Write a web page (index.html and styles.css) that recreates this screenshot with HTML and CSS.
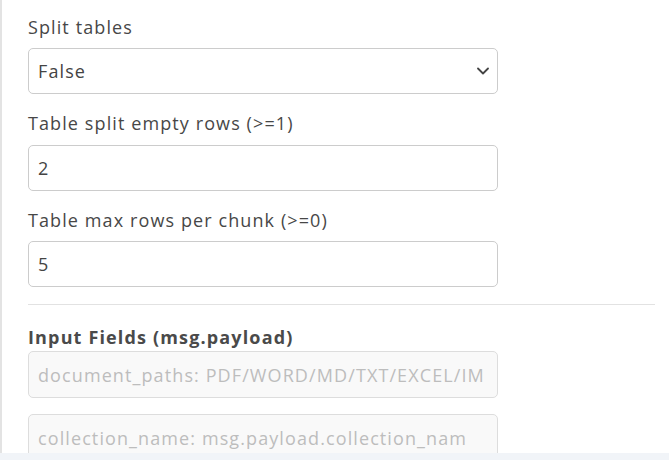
FILE: index.html
```html
<!DOCTYPE html>
<html>
<head>
<meta charset="utf-8">
<link rel="stylesheet" href="styles.css">
</head>
<body>
<div class="viewport">
  <div class="panel">
    <div class="field">
      <label class="label">Split tables</label>
      <div class="select">
        <span class="value">False</span>
        <svg class="chevron" width="12" height="8" viewBox="0 0 12 8"><path d="M1 1.5 L6 6.5 L11 1.5" fill="none" stroke="#444" stroke-width="1.8" stroke-linecap="round" stroke-linejoin="round"/></svg>
      </div>
    </div>
    <div class="field">
      <label class="label">Table split empty rows (&gt;=1)</label>
      <div class="input"><span class="value">2</span></div>
    </div>
    <div class="field">
      <label class="label">Table max rows per chunk (&gt;=0)</label>
      <div class="input"><span class="value">5</span></div>
    </div>
    <hr class="divider">
    <div class="heading">Input Fields (msg.payload)</div>
    <div class="input disabled"><span class="value">document_paths: PDF/WORD/MD/TXT/EXCEL/IM</span></div>
    <div class="input disabled"><span class="value">collection_name: msg.payload.collection_nam</span></div>
  </div>
</div>
<div class="strip"></div>
</body>
</html>
```

FILE: styles.css
```css
html, body {
  margin: 0;
  padding: 0;
  background: #ffffff;
}
body {
  font-family: "Open Sans", "DejaVu Sans", sans-serif;
  color: #444444;
  width: 669px;
  height: 460px;
  overflow: hidden;
}
.viewport {
  height: 453px;
  overflow: hidden;
  border-left: 2px solid #e3e3e3;
  box-sizing: border-box;
}
.panel {
  padding: 13.5px 14px 0 26px;
  display: flex;
  flex-direction: column;
}
.field {
  display: flex;
  flex-direction: column;
  margin-bottom: 16px;
}
.label {
  font-size: 18px;
  line-height: 27px;
  letter-spacing: 1.1px;
  margin-bottom: 7.5px;
  color: #474747;
}
.select, .input {
  width: 470px;
  height: 46px;
  box-sizing: border-box;
  border: 1px solid #cccccc;
  border-radius: 5px;
  display: flex;
  align-items: center;
  padding: 0 9px;
  overflow: hidden;
  white-space: nowrap;
  background: #ffffff;
}
.select {
  justify-content: space-between;
}
.value {
  font-size: 18px;
  letter-spacing: 1.1px;
  color: #444444;
}
.chevron {
  margin-right: -1px;
}
.divider {
  border: 0;
  border-top: 1px solid #e2e2e2;
  margin: 1px 0 19px 0;
  width: 627px;
}
.heading {
  font-size: 18px;
  font-weight: 700;
  line-height: 27px;
  letter-spacing: 1.15px;
  color: #4a4a4a;
}
.disabled {
  background: #f9f9f9;
  border-color: #dddddd;
  margin-bottom: 16px;
  height: 47px;
}
.disabled .value {
  color: #bdbdbd;
}
.strip {
  height: 7px;
  background: #f1f4f8;
}
```
